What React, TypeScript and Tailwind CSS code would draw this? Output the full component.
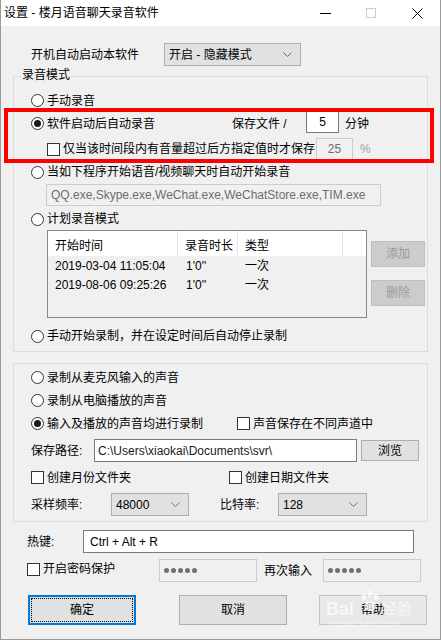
import React from "react";

function Radio({ checked = false }: { checked?: boolean }) {
  return (
    <span className="w-[13px] h-[13px] shrink-0 rounded-full border border-[#333333] bg-white flex items-center justify-center">
      {checked && <span className="w-[7px] h-[7px] rounded-full bg-[#1a1a1a]" />}
    </span>
  );
}

function Check() {
  return <span className="w-[13px] h-[13px] shrink-0 border border-[#333333] bg-white" />;
}

function Chevron() {
  return (
    <svg width="9" height="5" viewBox="0 0 9 5" className="shrink-0">
      <polyline points="0.5,0.5 4.5,4.5 8.5,0.5" fill="none" stroke="#707070" strokeWidth="1" />
    </svg>
  );
}

function Combo({ w, value }: { w: string; value: string }) {
  return (
    <div className={`${w} h-[23px] border border-[#adadad] bg-[#e1e1e1] flex items-center justify-between pl-[4px] pr-[8px]`}>
      <span>{value}</span>
      <Chevron />
    </div>
  );
}

function Dots() {
  return (
    <div className="w-[98px] h-[23px] border border-[#cccccc] bg-[#f0f0f0] flex items-center pl-[4px] gap-[2px]">
      <span className="w-[5px] h-[5px] rounded-full bg-[#707070]" />
      <span className="w-[5px] h-[5px] rounded-full bg-[#707070]" />
      <span className="w-[5px] h-[5px] rounded-full bg-[#707070]" />
      <span className="w-[5px] h-[5px] rounded-full bg-[#707070]" />
      <span className="w-[5px] h-[5px] rounded-full bg-[#707070]" />
    </div>
  );
}

export default function App() {
  return (
    <div className="w-[441px] h-[640px] overflow-hidden border-x border-b border-[#9a9a9a] bg-[#f0f0f0] text-[12px] leading-[16px] text-black font-['Liberation_Sans','Noto_Sans_CJK_SC',sans-serif] flex flex-col">
      {/* Title bar */}
      <div className="h-[26px] shrink-0 bg-white flex items-center">
        <div className="pl-[3px] flex-1">设置 - 楼月语音聊天录音软件</div>
        <div className="w-[46px] h-[26px] flex items-center justify-center">
          <span className="w-[11px] h-[1px] bg-black" />
        </div>
        <div className="w-[46px] h-[26px] flex items-center justify-center">
          <span className="w-[10px] h-[10px] border border-[#cccccc]" />
        </div>
        <div className="w-[46px] h-[26px] flex items-center justify-center">
          <svg width="11" height="11" viewBox="0 0 11 11">
            <path d="M0.5 0.5 L10.5 10.5 M10.5 0.5 L0.5 10.5" stroke="#000" strokeWidth="1" />
          </svg>
        </div>
      </div>

      {/* Body */}
      <div className="relative flex flex-col">
        {/* Auto start row */}
        <div className="mt-[17px] h-[23px] flex items-center">
          <div className="ml-[30px] w-[133px]">开机自动启动本软件</div>
          <Combo w="w-[137px]" value="开启 - 隐藏模式" />
        </div>

        {/* Group 1 */}
        <div className="relative mt-[10px] ml-[12px] w-[415px] border border-[#dcdcdc] pl-[17px] pt-[12px] pb-[4px] flex flex-col">
          <div className="absolute left-[7px] -top-[10px] h-[16px] px-[1px] bg-[#f0f0f0]">录音模式</div>

          <div className="h-[23px] flex items-center gap-[3px]">
            <Radio />
            <span>手动录音</span>
          </div>

          <div className="h-[23px] flex items-center">
            <div className="w-[201px] shrink-0 flex items-center gap-[3px]">
              <Radio checked />
              <span>软件启动后自动录音</span>
            </div>
            <div className="w-[74px] shrink-0 whitespace-nowrap">保存文件 /</div>
            <div className="w-[33px] h-[22px] mb-[3px] border border-[#7a7a7a] bg-white flex items-center justify-center">5</div>
            <div className="ml-[6px]">分钟</div>
          </div>

          <div className="mt-[2px] h-[24px] flex items-center">
            <div className="ml-[16px] w-[269px] shrink-0 flex items-center gap-[3px]">
              <Check />
              <span className="whitespace-nowrap">仅当该时间段内有音量超过后方指定值时才保存</span>
            </div>
            <div className="w-[37px] h-[22px] border border-[#cccccc] bg-[#f0f0f0] text-[#6d6d6d] flex items-center justify-center">25</div>
            <div className="ml-[7px] text-[#a0a0a0]">%</div>
          </div>

          <div className="h-[22px] flex items-center gap-[3px]">
            <Radio />
            <span>当如下程序开始语音/视频聊天时自动开始录音</span>
          </div>

          <div className="mt-[1px] ml-[15px] w-[335px] h-[22px] border border-[#cccccc] bg-[#f0f0f0] text-[#6d6d6d] flex items-center pl-[4px] whitespace-nowrap">
            QQ.exe,Skype.exe,WeChat.exe,WeChatStore.exe,TIM.exe
          </div>

          <div className="mt-[2px] h-[22px] flex items-center gap-[3px]">
            <Radio />
            <span>计划录音模式</span>
          </div>

          <div className="flex">
            <div className="ml-[16px] w-[320px] h-[88px] border border-[#828790] bg-[#f0f0f0] flex flex-col">
              <div className="h-[25px] bg-white flex">
                <div className="w-[130px] pl-[7px] pt-[7px] border-r border-[#e5e5e5]">开始时间</div>
                <div className="w-[60px] pl-[7px] pt-[7px] border-r border-[#e5e5e5]">录音时长</div>
                <div className="w-[105px] pl-[7px] pt-[7px] border-r border-[#e5e5e5]">类型</div>
                <div className="flex-1" />
              </div>
              <div className="h-[19px] flex items-center">
                <div className="w-[130px] pl-[7px]">2019-03-04 11:05:04</div>
                <div className="w-[60px] pl-[8px]">1'0''</div>
                <div className="pl-[7px]">一次</div>
              </div>
              <div className="h-[19px] flex items-center">
                <div className="w-[130px] pl-[7px]">2019-08-06 09:25:26</div>
                <div className="w-[60px] pl-[8px]">1'0''</div>
                <div className="pl-[7px]">一次</div>
              </div>
            </div>
            <div className="ml-[4px] flex flex-col">
              <div className="mt-[11px] w-[54px] h-[26px] border border-[#bfbfbf] bg-[#cccccc] text-[#9a9a9a] flex items-center justify-center">添加</div>
              <div className="mt-[13px] w-[54px] h-[26px] border border-[#bfbfbf] bg-[#cccccc] text-[#9a9a9a] flex items-center justify-center">删除</div>
            </div>
          </div>

          <div className="mt-[7px] h-[22px] flex items-center gap-[3px]">
            <Radio />
            <span>手动开始录制，并在设定时间后自动停止录制</span>
          </div>
        </div>

        {/* Group 2 */}
        <div className="mt-[11px] ml-[12px] w-[415px] border border-[#dcdcdc] pl-[17px] pt-[2px] pb-[5px] flex flex-col">
          <div className="h-[23px] flex items-center gap-[3px]">
            <Radio />
            <span>录制从麦克风输入的声音</span>
          </div>
          <div className="h-[23px] flex items-center gap-[3px]">
            <Radio />
            <span>录制从电脑播放的声音</span>
          </div>
          <div className="h-[23px] flex items-center">
            <div className="w-[206px] shrink-0 flex items-center gap-[3px]">
              <Radio checked />
              <span>输入及播放的声音均进行录制</span>
            </div>
            <div className="flex items-center gap-[3px]">
              <Check />
              <span>声音保存在不同声道中</span>
            </div>
          </div>
          <div className="mt-[4px] h-[23px] flex items-center">
            <div className="w-[63px] shrink-0">保存路径:</div>
            <div className="w-[263px] h-[23px] border border-[#7a7a7a] bg-white text-[#1a1a1a] flex items-center pl-[3px]">C:\Users\xiaokai\Documents\svr\</div>
            <div className="ml-[4px] w-[58px] h-[21px] border border-[#adadad] bg-[#e1e1e1] flex items-center justify-center">浏览</div>
          </div>
          <div className="mt-[4px] h-[23px] flex items-center">
            <div className="w-[198px] shrink-0 flex items-center gap-[3px]">
              <Check />
              <span>创建月份文件夹</span>
            </div>
            <div className="flex items-center gap-[3px]">
              <Check />
              <span>创建日期文件夹</span>
            </div>
          </div>
          <div className="mt-[4px] h-[23px] flex items-center">
            <div className="w-[80px] shrink-0">采样频率:</div>
            <Combo w="w-[78px]" value="48000" />
            <div className="ml-[31px] w-[58px] shrink-0">比特率:</div>
            <Combo w="w-[89px]" value="128" />
          </div>
        </div>

        {/* Hotkey */}
        <div className="mt-[8px] h-[23px] flex items-center">
          <div className="ml-[26px] w-[56px] shrink-0">热键:</div>
          <div className="w-[331px] h-[23px] border border-[#7a7a7a] bg-white flex items-center pl-[6px]">Ctrl + Alt + R</div>
        </div>

        {/* Password */}
        <div className="mt-[6px] h-[23px] flex items-center">
          <div className="ml-[26px] w-[132px] shrink-0 flex items-center gap-[3px] self-start pt-[2px]">
            <Check />
            <span>开启密码保护</span>
          </div>
          <Dots />
          <div className="ml-[7px] w-[59px] shrink-0">再次输入</div>
          <Dots />
        </div>

        {/* Buttons */}
        <div className="mt-[13px] h-[30px] flex items-center">
          <div className="relative ml-[27px] w-[108px] h-[30px] border-2 border-[#0078d7] bg-[#e1e1e1] flex items-center justify-center">
            <span className="absolute inset-[1px] border border-dotted border-black" />
            确定
          </div>
          <div className="ml-[43px] w-[108px] h-[30px] border border-[#adadad] bg-[#e1e1e1] flex items-center justify-center">取消</div>
          <div className="relative ml-[32px] w-[108px] h-[30px] border border-[#c4c4c4] bg-[#e8e8e8] flex items-center justify-center">
            <span>帮助</span>
            <div className="absolute left-0 -top-[8px] w-[112px] h-[44px] pointer-events-none">
              <div className="absolute left-[6px] top-[11px] text-[18px] leading-[20px] font-bold text-white/70 font-['Liberation_Sans',sans-serif]">Bai</div>
              <svg className="absolute left-[38px] top-[2px]" width="24" height="24" viewBox="0 0 24 24">
                <g fill="#ffffff" fillOpacity="0.7">
                  <ellipse cx="6" cy="7" rx="2.5" ry="3.5" />
                  <ellipse cx="12" cy="4" rx="2.5" ry="3.5" />
                  <ellipse cx="18" cy="7" rx="2.5" ry="3.5" />
                  <ellipse cx="12" cy="16" rx="6" ry="5" />
                </g>
              </svg>
              <div className="absolute left-[62px] top-[12px] text-[15px] leading-[18px] text-white/70">经验</div>
              <div className="absolute left-[8px] top-[31px] text-[8px] leading-[10px] text-white/70 tracking-[0.5px]">jingyan.baidu.com</div>
            </div>
          </div>
        </div>

        {/* Red highlight overlay */}
        <div className="absolute left-[3px] top-[82px] w-[430px] h-[55px] border-4 border-[#ff0000] pointer-events-none" />
      </div>
    </div>
  );
}
